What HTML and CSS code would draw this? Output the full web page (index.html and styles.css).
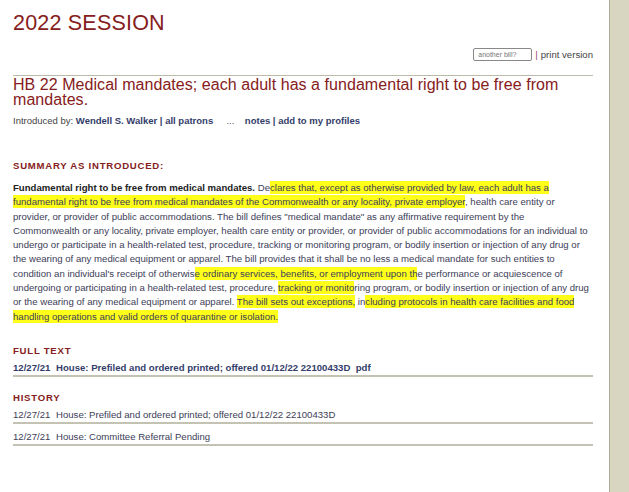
FILE: index.html
```html
<!DOCTYPE html>
<html>
<head>
<meta charset="utf-8">
<link rel="stylesheet" href="styles.css">
</head>
<body>
<div class="page">
  <main class="main">
    <h1 class="session">2022 SESSION</h1>
    <div class="tools">
      <input class="bill-input" type="text" placeholder="another bill?">
      <span class="pipe">|</span>
      <a class="print">print version</a>
    </div>
    <h2 class="bill-title">HB 22 Medical mandates; each adult has a fundamental right to be free from mandates.</h2>
    <p class="intro">Introduced by: <a class="lnk">Wendell S. Walker</a> <b class="sep">|</b> <a class="lnk">all patrons</a> &nbsp;&nbsp;&nbsp; <span class="dots">...</span> &nbsp;&nbsp; <a class="lnk">notes</a> <b class="sep">|</b> <a class="lnk">add to my profiles</a></p>

    <h3 class="section-head summary-head">SUMMARY AS INTRODUCED:</h3>
    <p class="summary"><b>Fundamental right to be free from medical mandates.</b> De<span class="hl">clares that, except as otherwise provided by law, each adult has a</span> <span class="hl">fundamental right to be free from medical mandates of the Commonwealth or any locality, private employer</span>, health care entity or provider, or provider of public accommodations. The bill defines "medical mandate" as any affirmative requirement by the Commonwealth or any locality, private employer, health care entity or provider, or provider of public accommodations for an individual to undergo or participate in a health-related test, procedure, tracking or monitoring program, or bodily insertion or injection of any drug or the wearing of any medical equipment or apparel. The bill provides that it shall be no less a medical mandate for such entities to condition an individual's receipt of otherwis<span class="hl">e ordinary services, benefits, or employment upon th</span>e performance or acquiescence of undergoing or participating in a health-related test, procedure, <span class="hl">tracking or monito</span>ring program, or bodily insertion or injection of any drug or the wearing of any medical equipment or apparel. <span class="hl">The bill sets out exceptions,</span> in<span class="hl">cluding protocols in health care facilities and food</span> <span class="hl">handling operations and valid orders of quarantine or isolation.</span></p>

    <h3 class="section-head">FULL TEXT</h3>
    <ul class="rows">
      <li class="row row-bold"><span class="date">12/27/21</span> House: Prefiled and ordered printed; offered 01/12/22 22100433D &nbsp;pdf</li>
    </ul>

    <h3 class="section-head">HISTORY</h3>
    <ul class="rows">
      <li class="row"><span class="date">12/27/21</span> House: Prefiled and ordered printed; offered 01/12/22 22100433D</li>
      <li class="row"><span class="date">12/27/21</span> House: Committee Referral Pending</li>
    </ul>
  </main>
  <aside class="side"></aside>
</div>
</body>
</html>
```

FILE: styles.css
```css
html, body {
  margin: 0;
  padding: 0;
  background: #ffffff;
  height: 100%;
}
body {
  font-family: "Liberation Sans", Arial, sans-serif;
  color: #333;
}
.page {
  display: flex;
  min-height: 100vh;
}
.main {
  width: 580px;
  margin-left: 13px;
  flex: none;
}
.side {
  margin-left: auto;
  width: 19px;
  background: #d8d5c0;
  border-left: 1px solid #aeac98;
  flex: none;
}
.session {
  margin: 11px 0 0;
  font-size: 21.5px;
  line-height: 25px;
  font-weight: normal;
  color: #862020;
  letter-spacing: 0.2px;
}
.tools {
  display: flex;
  justify-content: flex-end;
  align-items: center;
  margin-top: 11px;
  height: 14px;
  font-size: 9.6px;
  color: #444;
  padding-bottom: 14px;
  border-bottom: 1px solid #bcbaa8;
}
.bill-input {
  box-sizing: border-box;
  width: 59px;
  height: 13px;
  border: 1px solid #888;
  border-radius: 2px;
  padding: 0 0 0 4px;
  font-family: "Liberation Sans", Arial, sans-serif;
  font-size: 7px;
  color: #777;
  margin: 0 3px 0 0;
}
.bill-input::placeholder {
  color: #777;
}
.pipe {
  color: #a0406a;
  margin-right: 3px;
}
.print {
  color: #444;
}
.bill-title {
  margin: 2px 0 0;
  font-size: 16px;
  line-height: 14.5px;
  font-weight: normal;
  color: #862020;
  letter-spacing: 0.05px;
}
.intro {
  margin: 7px 0 0;
  font-size: 9.5px;
  line-height: 13px;
  color: #444;
}
.lnk {
  font-weight: bold;
  color: #333d6a;
}
.sep {
  color: #333d6a;
}
.dots {
  color: #555;
}
.section-head {
  margin: 0;
  font-size: 9.6px;
  line-height: 12px;
  font-weight: bold;
  letter-spacing: 0.75px;
  color: #862020;
}
.summary-head {
  margin-top: 33px;
}
.summary {
  margin: 9px 0 21px;
  font-size: 9.6px;
  line-height: 14.3px;
  color: #3d3d58;
  width: 580px;
}
.summary b {
  color: #222;
}
.hl {
  background: #ffff1a;
  box-shadow: 0 1px 0 #ffff1a, 0 -1px 0 #ffff1a;
}
.rows {
  list-style: none;
  margin: 5px 0 15px;
  padding: 0;
}
.row {
  font-size: 9.6px;
  line-height: 12px;
  padding: 0 0 1px;
  border-bottom: 2px solid #c4c2b2;
  color: #3d3d58;
}
.row + .row {
  margin-top: 7px;
}
.row-bold {
  font-weight: bold;
  color: #333d6a;
}
.date {
  margin-right: 3px;
}
```
